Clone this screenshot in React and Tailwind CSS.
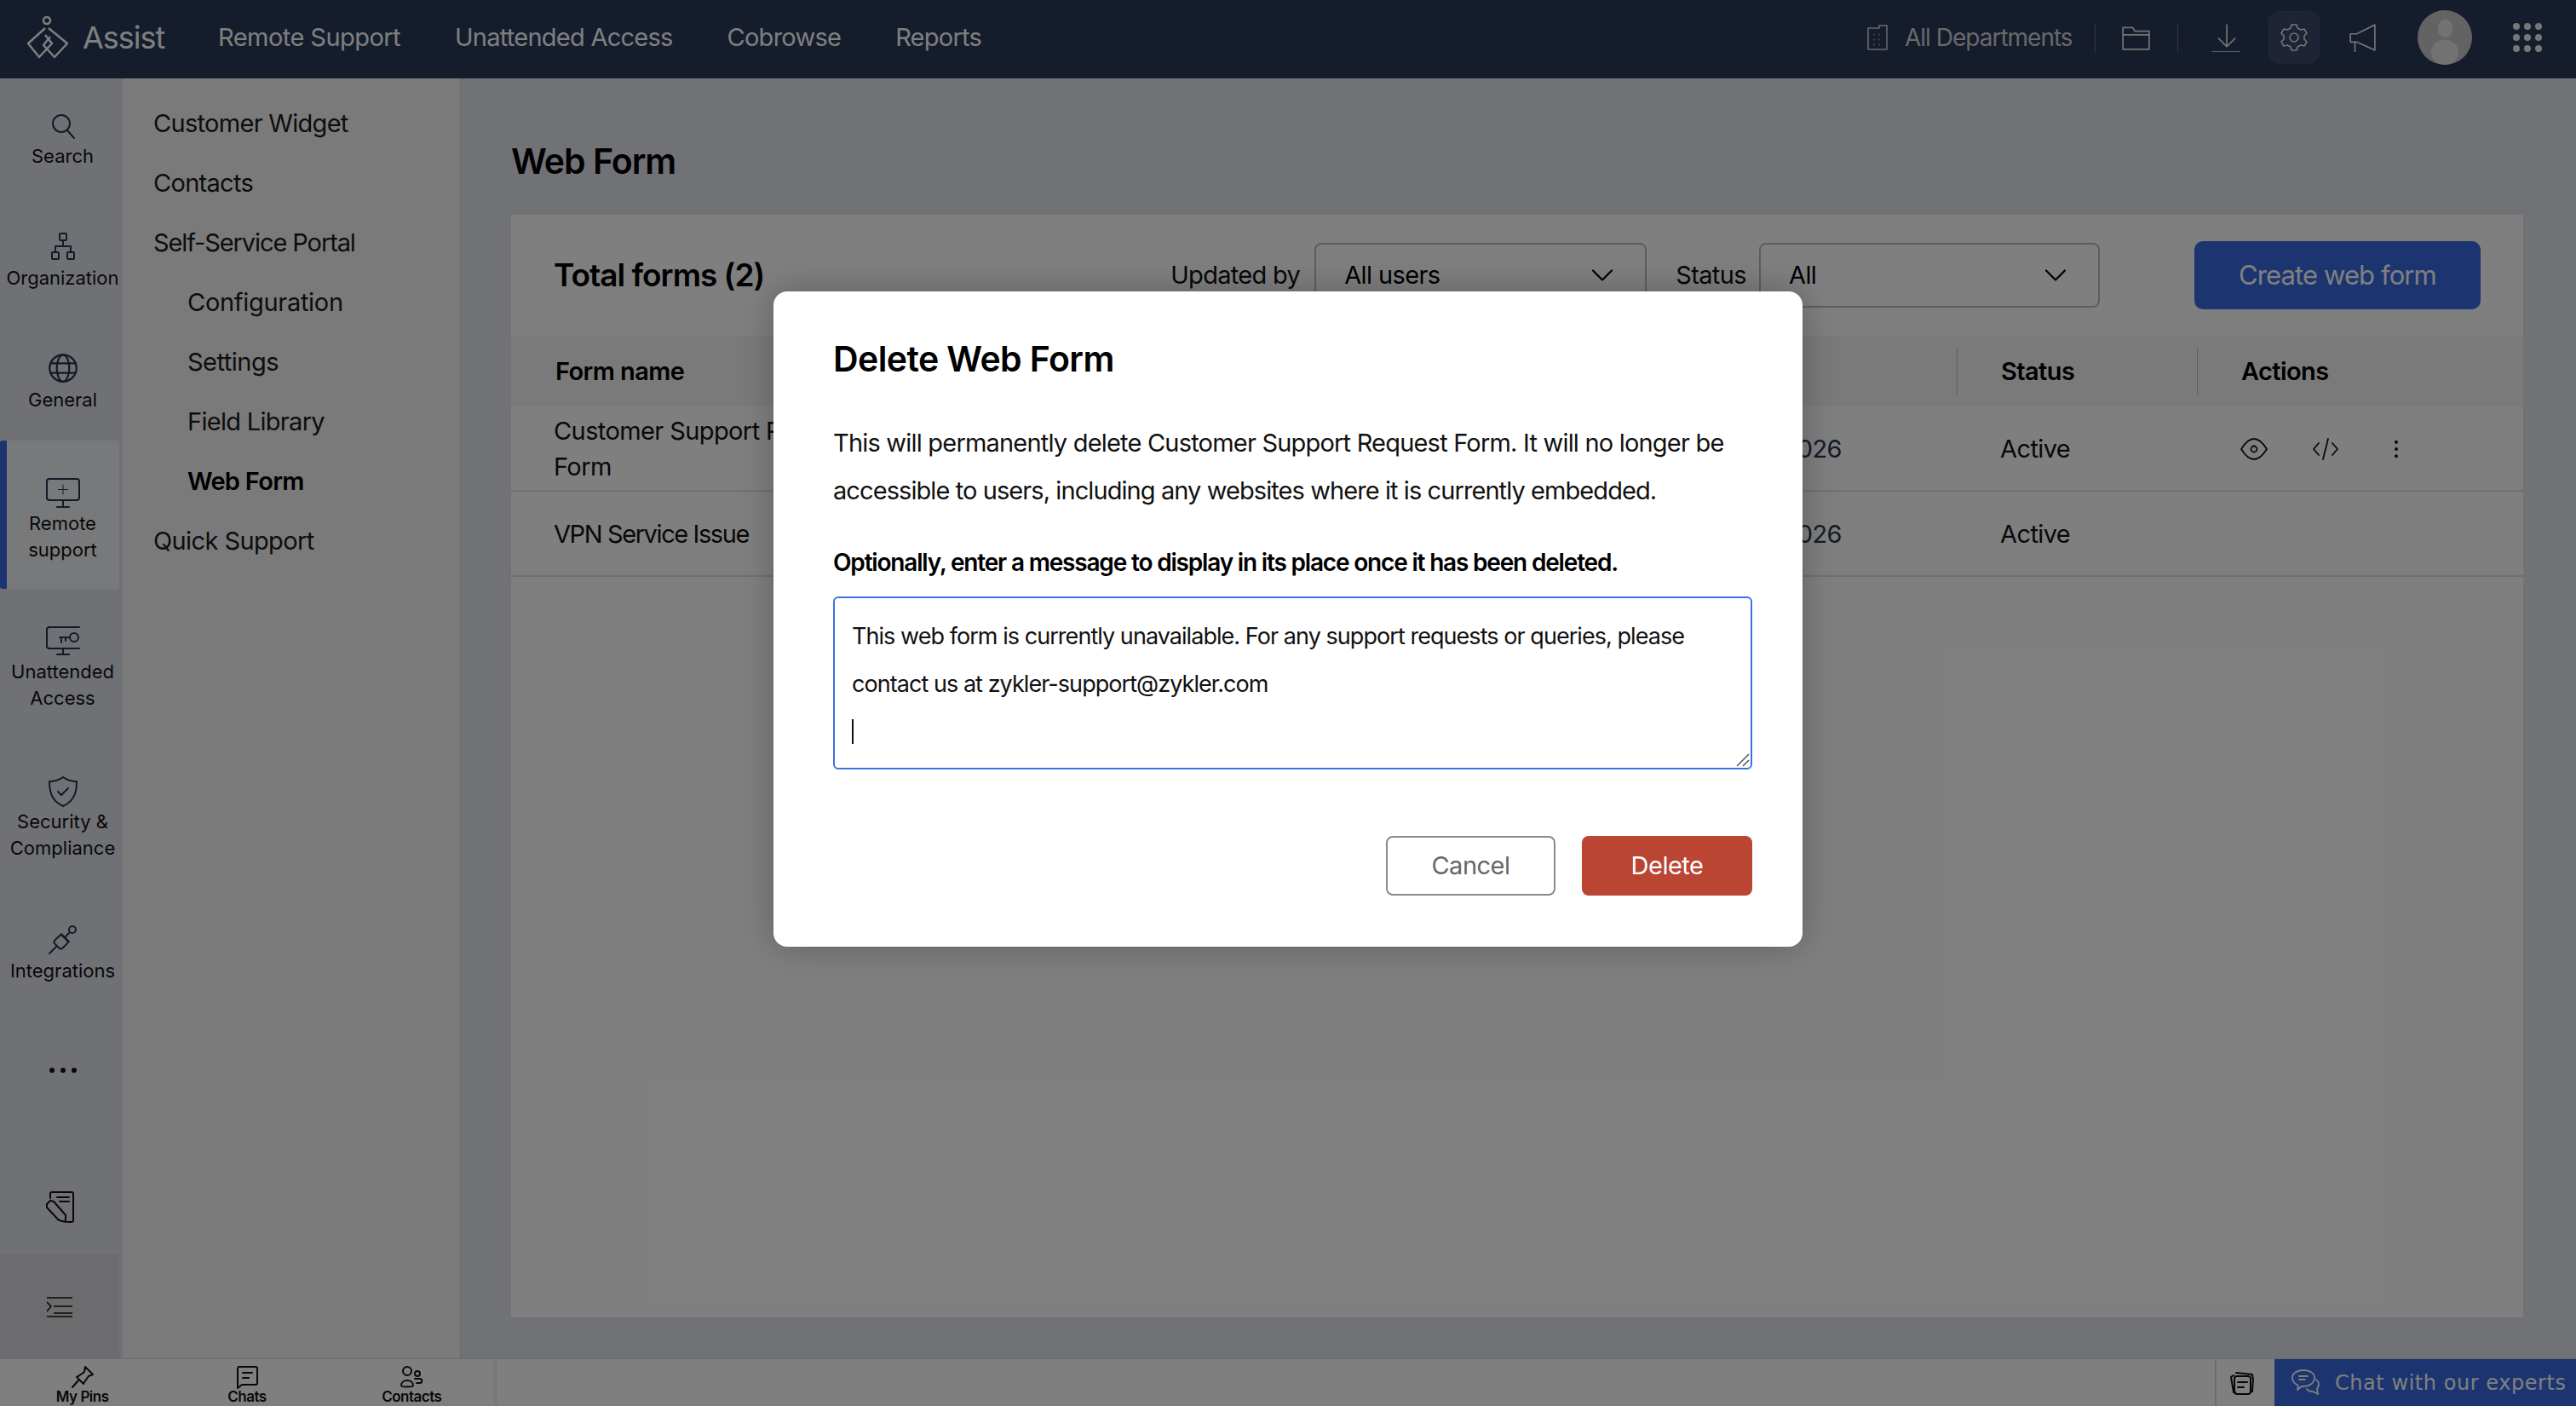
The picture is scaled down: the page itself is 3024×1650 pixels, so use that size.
import React from "react";
import { ChevronDown, EllipsisVertical } from "lucide-react";

const navy = "#27324d";

const Ico = ({ size = 32, vb = 32, sw = 2, color = "currentColor", className = "", children }) => (
  <svg width={size} height={size} viewBox={`0 0 ${vb} ${vb}`} fill="none" stroke={color} strokeWidth={sw} strokeLinecap="round" strokeLinejoin="round" className={className}>
    {children}
  </svg>
);

const railItems = [
  {
    label: ["Search"], h: "h-[137px] pt-[36px]",
    icon: <Ico><circle cx="14" cy="13" r="10" /><path d="M21 21l8 9" /></Ico>,
  },
  {
    label: ["Organization"], h: "h-[143px] pt-[40px]", lm: "mt-[2px]",
    icon: <Ico><rect x="12" y="1" width="8" height="8" rx="1" /><rect x="3" y="23" width="8" height="8" rx="1" /><rect x="21" y="23" width="8" height="8" rx="1" /><path d="M16 9v7M7 23v-7h18v7" /></Ico>,
  },
  {
    label: ["General"], h: "h-[145px] pt-[40px]", lm: "mt-[2px]",
    icon: <Ico size={36}><circle cx="16" cy="16" r="14" /><ellipse cx="16" cy="16" rx="6.5" ry="14" /><path d="M3 11h26M3 21h26" /></Ico>,
  },
  {
    label: ["Remote", "support"], h: "h-[174px] pt-[42px]", active: true,
    icon: <Ico size={40} vb={40}><rect x="1" y="3" width="38" height="25" rx="3" /><path d="M20 28v7M13 36h14" /><path d="M20 10v11M14.500 15.500h11" strokeWidth="1" /></Ico>,
  },
  {
    label: ["Unattended", "Access"], h: "h-[176px] pt-[41px]", lm: "mt-[1px]",
    icon: <Ico size={40} vb={40}><path d="M39 4H4a3 3 0 0 0-3 3v19a3 3 0 0 0 3 3h35" /><path d="M20 29v7M13 36h14" /><circle cx="33" cy="16" r="5" /><path d="M28 16H16M18 16v6M23 16v4" /></Ico>,
  },
  {
    label: ["Security &", "Compliance"], h: "h-[175px] pt-[42px]",
    icon: <Ico size={38} vb={38}><path d="M19 2c4 3 10 5 16 5 0 11-2 23-16 29C5 30 3 18 3 7c6 0 12-2 16-5z" /><path d="M13 19l4 4 8-8" /></Ico>,
  },
  {
    label: ["Integrations"], h: "h-[143px] pt-[41px]", lm: "mt-[1px]",
    icon: <Ico size={38} vb={38}><path d="M3 35l8-8" /><rect x="10" y="15" width="13" height="13" rx="3" transform="rotate(45 16.500 21.500)" /><path d="M17 12l9 9" /><path d="M22 15l5-5" /><circle cx="30" cy="7" r="4" /></Ico>,
  },
];

const bottomTabs = [
  {
    label: "My Pins",
    icon: <Ico size={28} vb={28}><path d="M17 2l9 9-5 2-5 7-1 2-8-8 2-1 7-5z" /><path d="M9 18l-7 8" /></Ico>,
  },
  {
    label: "Chats",
    icon: <Ico size={28} vb={28}><path d="M3 4a2 2 0 0 1 2-2h19a2 2 0 0 1 2 2v17a2 2 0 0 1-2 2H8l-5 4z" /><path d="M9 9h11M9 15h7" /></Ico>,
  },
  {
    label: "Contacts",
    icon: <Ico size={28} vb={28}><circle cx="9" cy="7" r="5" /><path d="M2 24c0-8 14-8 14 0 0 2-14 2-14 0z" /><circle cx="21" cy="10" r="3" /><path d="M18 16h6c3 0 3 5 0 5h-4" /></Ico>,
  },
];

const panelItems = [
  { label: "Customer Widget", track: "tracking-[-0.7px]" },
  { label: "Contacts", track: "tracking-[-0.7px]" },
  { label: "Self-Service Portal", track: "tracking-[-1.1px]" },
  { label: "Configuration", sub: true, track: "tracking-[-0.3px]" },
  { label: "Settings", sub: true, track: "tracking-[-0.5px]" },
  { label: "Field Library", sub: true, track: "tracking-[-0.7px]" },
  { label: "Web Form", sub: true, active: true, track: "tracking-[-0.7px]" },
  { label: "Quick Support", track: "tracking-[-0.6px]" },
];

const TopBar = () => (
  <header className="h-[92px] shrink-0 bg-[#2a3859] flex items-center pb-[4px] text-white">
    <svg width="50" height="50" viewBox="0 0 50 50" fill="none" stroke="#fff" strokeWidth="2.500" strokeLinejoin="round" className="ml-[31px]">
      <circle cx="24" cy="5" r="4" />
      <path d="M26 14L48 32 33 48 20 34 28 24" />
      <path d="M22 14L2 32l13 16 15-16-8-10" />
    </svg>
    <span className="ml-[16px] w-[96px] text-[36px] tracking-[-1px]">Assist</span>
    <nav className="ml-[63px] flex items-center gap-[64px] text-[29px] tracking-[-0.75px]">
      <span className="tracking-[-0.55px]">Remote Support</span>
      <span>Unattended Access</span>
      <span>Cobrowse</span>
      <span>Reports</span>
    </nav>
    <div className="ml-auto flex items-center text-[#d2d2d2] pr-[40px]">
      <Ico size={32} sw={1.6} className="mr-[16px]">
        <path d="M5 5h13V2h9v28H5z" />
        <path d="M12 12v1M18 12v1M12 18v1M18 18v1M12 24v1M18 24v1" strokeWidth="1" />
      </Ico>
      <span className="text-[28px] tracking-[-1px] w-[194px] whitespace-nowrap">All Departments</span>
      <div className="ml-[29px] w-[1px] h-[34px] bg-[#707070]" />
      <Ico size={34} sw={1.6} className="ml-[30px] text-[#e8e8e8]">
        <path d="M2 8V5h11l2 4h16v20H2z" fill="none" />
        <path d="M2 13h29" />
      </Ico>
      <div className="ml-[32px] w-[1px] h-[34px] bg-[#707070]" />
      <Ico size={34} sw={1.6} className="ml-[39px] text-[#e8e8e8]">
        <path d="M17 2v24M8 17l9 9 9-9M1 32h32" />
      </Ico>
      <div className="ml-[32px] w-[62px] h-[62px] rounded-[14px] bg-[#3c496b] flex items-center justify-center text-[#e8e8e8]">
        <Ico size={34} vb={34} sw={1.6}>
          <path d="M14 2h6l1 4 4 2 4-1 3 5-3 3v4l3 3-3 5-4-1-4 2-1 4h-6l-1-4-4-2-4 1-3-5 3-3v-4L2 12l3-5 4 1 4-2z" />
          <circle cx="17" cy="17" r="5" />
        </Ico>
      </div>
      <Ico size={34} sw={1.6} className="ml-[32px] text-[#e8e8e8]">
        <path d="M30 2v28L10 21H3v-9h7z" />
        <path d="M8 21v11" />
      </Ico>
      <div className="ml-[48px] w-[64px] h-[64px] rounded-full bg-[#c6c6c6] flex flex-col items-center overflow-hidden">
        <div className="mt-[11px] w-[17px] h-[24px] rounded-full bg-[#e4e4e4]" />
        <div className="mt-[3px] w-[32px] h-[34px] rounded-full bg-[#e4e4e4]" />
      </div>
      <div className="ml-[48px] grid grid-cols-3 gap-[5px]">
        {Array.from({ length: 9 }).map((_, i) => (
          <div key={i} className="w-[8px] h-[8px] rounded-full bg-[#eeeeee]" />
        ))}
      </div>
    </div>
  </header>
);

const Rail = () => (
  <aside className="w-[144px] shrink-0 bg-[#e0e3ea] flex flex-col text-[#1c1c1c]">
    {railItems.map((item) => (
      <div
        key={item.label[0]}
        className={`${item.h} w-[140px] pl-[7px] relative flex flex-col items-center shrink-0 ${item.active ? "bg-[#f1f2f4] rounded-[3px]" : ""}`}
        style={{ color: navy }}
      >
        {item.active && <div className="absolute left-0 top-0 bottom-0 w-[8px] bg-[#3869e0] rounded-l-[3px]" />}
        <div className="h-[40px] flex items-center justify-center">{item.icon}</div>
        <div className={`${item.lm || ""} text-center text-[22px] leading-[31px] text-[#111111] whitespace-nowrap`}>
          {item.label.map((l) => <div key={l}>{l}</div>)}
        </div>
      </div>
    ))}
    <div className="h-[142px] w-[140px] pl-[7px] shrink-0 flex items-center justify-center gap-[7px]">
      <div className="w-[6px] h-[6px] rounded-full bg-[#111111]" />
      <div className="w-[6px] h-[6px] rounded-full bg-[#111111]" />
      <div className="w-[6px] h-[6px] rounded-full bg-[#111111]" />
    </div>
    <div className="mt-auto mb-[26px] w-[140px] pl-[3px] h-[60px] flex items-center justify-center text-[#111111]">
      <Ico size={40} vb={40}>
        <path d="M7 10V5a2 2 0 0 1 2-2h23a2 2 0 0 1 2 2v31a2 2 0 0 1-2 2h-5" />
        <path d="M15 9h14M18 14h11" />
        <path d="M3 17l4-4 4 1 14 16 0 8-8-2L3 21z" />
      </Ico>
    </div>
    <div className="h-[122px] w-[140px] bg-[#d8d9dd] flex items-start justify-center pt-[50px] text-[#111111]">
      <Ico size={30} vb={30} sw={1.6}>
        <path d="M0 1h30M8 11h22M8 19h22M0 23h30M0 6l5 5-5 6" strokeLinecap="butt" />
      </Ico>
    </div>
  </aside>
);

const Panel = () => (
  <aside className="w-[398px] shrink-0 bg-[#f5f5f5] border-r-2 border-[#dcdde2] pt-[18px] text-[#1a1a1a]">
    {panelItems.map((item) => (
      <div
        key={item.label}
        className={`h-[70px] flex items-center text-[29px] ${item.track} ${item.sub ? "pl-[76px]" : "pl-[36px]"} ${item.active ? "font-semibold text-[#000000]" : ""}`}
      >
        {item.label}
      </div>
    ))}
  </aside>
);

const Select = ({ value, className }) => (
  <div className={`h-[76px] border-2 border-[#bdbdbd] rounded-[8px] flex items-center justify-between pl-[33px] pr-[28px] text-[29px] tracking-[-0.6px] text-[#000000] ${className}`}>
    <span>{value}</span>
    <ChevronDown size={44} strokeWidth={1.2} />
  </div>
);

const rows = [
  { name: ["Customer Support Request", "Form"], date: "Feb 12, 2026", actions: true, track: "tracking-[-0.6px]" },
  { name: ["VPN Service Issue"], date: "Feb 09, 2026", track: "tracking-[-1.4px]" },
];

const Main = () => (
  <main className="flex-1 min-w-0 bg-[#e3e5ec] pt-[60px] pl-[58px] pr-[62px] pb-[48px] flex flex-col">
    <h1 className="h-[76px] mb-[24px] flex items-center text-[41px] tracking-[-1px] font-semibold text-[#000000]">Web Form</h1>
    <section className="flex-1 bg-white flex flex-col text-[#111111]">
      <div className="h-[142px] shrink-0 flex items-center pl-[50px] pr-[50px]">
        <h2 className="text-[37px] tracking-[-1px] font-semibold text-[#000000]">Total forms (2)</h2>
        <span className="ml-auto text-[29px] tracking-[-0.7px]">Updated by</span>
        <Select value="All users" className="ml-[17px] w-[390px]" />
        <span className="ml-[34px] text-[29px] tracking-[-0.6px]">Status</span>
        <Select value="All" className="ml-[15px] w-[400px]" />
        <button className="ml-[111px] w-[336px] h-[80px] bg-[#3869e0] rounded-[10px] text-[31px] tracking-[-0.9px] text-white">Create web form</button>
      </div>
      <div className="h-[83px] shrink-0 bg-[#f4f4f4] grid grid-cols-[1697px_282px_1fr] items-center text-[29px] tracking-[-0.6px] font-semibold text-[#000000]">
        <div className="pl-[52px]">Form name</div>
        <div className="pl-[51px] h-[55px] flex items-center border-l border-[#bcbcbc]">Status</div>
        <div className="pl-[51px] h-[55px] flex items-center border-l border-[#bcbcbc]">Actions</div>
      </div>
      {rows.map((row) => (
        <div key={row.date} className="h-[100px] shrink-0 pt-[2px] border-b-2 border-[#e0e0e6] grid grid-cols-[1697px_282px_1fr] items-center text-[29px] tracking-[-0.6px]">
          <div className="pl-[50px] pr-[135px] flex items-center justify-between">
            <div className={`w-[300px] overflow-hidden whitespace-nowrap leading-[42px] ${row.track}`}>{row.name.map((n) => <div key={n}>{n}</div>)}</div>
            <span className="text-[#2a3550]">{row.date}</span>
          </div>
          <div className="pl-[51px]">Active</div>
          {row.actions ? (
            <div className="pl-[51px] flex items-center">
              <Ico size={32} sw={1.8}>
                <path d="M1 16C6 8 11 4 16 4s10 4 15 12c-5 8-10 12-15 12S6 24 1 16z" />
                <circle cx="16" cy="16" r="3.500" />
              </Ico>
              <Ico size={32} sw={1.8} className="ml-[52px]">
                <path d="M8 9l-6 7 6 7M24 9l6 7-6 7M19 4l-6 24" />
              </Ico>
              <EllipsisVertical size={28} strokeWidth={1.5} className="ml-[53px]" />
            </div>
          ) : <div />}
        </div>
      ))}
    </section>
  </main>
);

const BottomBar = () => (
  <footer className="h-[56px] shrink-0 bg-white flex items-stretch border-t border-[#d5d6dc]">
    <div className="w-[580px] grid grid-cols-3">
      {bottomTabs.map((tab) => (
        <div key={tab.label} className="flex flex-col items-center text-[#111111] pt-[7px]">
          {tab.icon}
          <span className="text-[17px] leading-[18px] tracking-[-0.5px] font-semibold whitespace-nowrap">{tab.label}</span>
        </div>
      ))}
    </div>
    <div className="w-[4px] bg-[#f1f1f1]" />
    <div className="flex-1" />
    <div className="w-[2px] bg-[#d9d9d9]" />
    <div className="w-[68px] flex items-center pl-[15px] text-[#111111]">
      <Ico size={30} vb={30}>
        <path d="M5 6L2 8l3 18h2M8 3l19 2 1 6-1 14" />
        <rect x="6" y="7" width="19" height="21" rx="3" />
        <path d="M10 14h11M10 20h7" />
      </Ico>
    </div>
    <div className="w-[354px] bg-[#3869e0] flex items-center pl-[20px] text-white">
      <Ico size={34} vb={34} sw={1.8} className="shrink-0">
        <path d="M14 2c7 0 13 3 13 9s-6 10-13 10h-2l-5 4 1-5C4 18 1 15 1 11c0-6 6-9 13-9z" />
        <path d="M9 9h10M9 13h7" />
        <path d="M29 13c3 2 4 6 2 9l-1 2 1 6-6-3c-3 0-6-1-7-3" />
      </Ico>
      <span className="ml-[17px] text-[24px] tracking-[0.55px] whitespace-nowrap font-['DejaVu_Sans']">Chat with our experts</span>
    </div>
  </footer>
);

const DeleteModal = () => (
  <div className="w-[1208px] h-[769px] bg-white rounded-[16px] shadow-[0_0_40px_rgba(0,0,0,0.25)] pt-[50px] pl-[70px] pr-[59px] text-[#000000] flex flex-col">
    <h2 className="text-[41px] leading-[58px] tracking-[-0.6px] font-semibold">Delete Web Form</h2>
    <p className="mt-[42px] text-[29px] leading-[56px] whitespace-nowrap text-[#111111]">
      <span className="block tracking-[-0.8px]">This will permanently delete Customer Support Request Form. It will no longer be</span>
      <span className="block tracking-[-0.92px]">accessible to users, including any websites where it is currently embedded.</span>
    </p>
    <p className="mt-[28px] text-[28px] leading-[56px] tracking-[-1.18px] font-semibold whitespace-nowrap">Optionally, enter a message to display in its place once it has been deleted.</p>
    <div className="mt-[12px] h-[203px] relative border-2 border-[#3d70e6] rounded-[6px] pl-[20px] pt-[17px] text-[27px] leading-[56px] whitespace-nowrap text-[#111111]">
      <div className="tracking-[-0.95px]">This web form is currently unavailable. For any support requests or queries, please</div>
      <div className="tracking-[-0.95px]">contact us at zykler-support@zykler.com</div>
      <div className="mt-[13px] w-[2px] h-[29px] bg-[#111111]" />
      <svg width="16" height="16" viewBox="0 0 16 16" fill="none" stroke="#555555" strokeWidth="1.500" className="absolute right-[1px] bottom-[1px]">
        <path d="M1 15L15 1M8 15l7-7" />
      </svg>
    </div>
    <div className="mt-[78px] flex justify-end gap-[31px] text-[29px] tracking-[-0.5px]">
      <button className="w-[199px] h-[70px] border-2 border-[#8a8a8a] rounded-[8px] text-[#666666]">Cancel</button>
      <button className="w-[200px] h-[70px] bg-[#bb4533] rounded-[8px] text-white">Delete</button>
    </div>
  </div>
);

export default function App() {
  return (
    <div className="relative w-[3024px] h-[1650px] overflow-hidden flex flex-col font-['Inter','Noto_Sans',sans-serif]">
      <TopBar />
      <div className="flex-1 min-h-0 flex">
        <Rail />
        <Panel />
        <Main />
      </div>
      <BottomBar />
      <div className="absolute inset-0 bg-black/50 flex justify-center items-start pt-[342px]">
        <DeleteModal />
      </div>
    </div>
  );
}
